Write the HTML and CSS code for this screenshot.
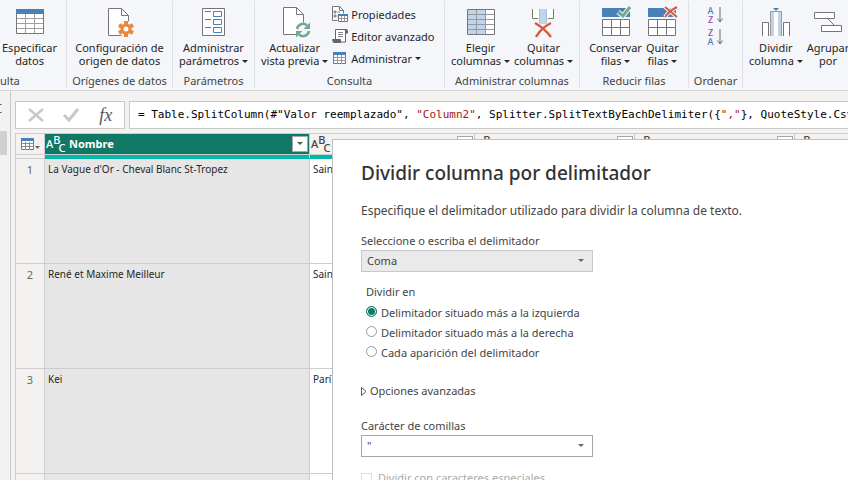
FILE: index.html
```html
<!DOCTYPE html>
<html lang="es">
<head>
<meta charset="utf-8">
<title>Editor de Power Query</title>
<link rel="stylesheet" href="styles.css">
</head>
<body>
<header class="ribbon">
  <section class="group g-query">
    <div class="tools">
      <button class="tool"><svg class="icon" viewBox="0 0 32 32"><path d="M2.500 5.500h27v22h-27z" fill="#fff" stroke="#767676"/><path d="M3 12.500h26M3 17.500h26M3 22.500h26M11.500 8v19M20.500 8v19" stroke="#a0a0a0" fill="none"/><path d="M2 3h28v5H2z" fill="#4a80b8"/></svg>Especificar<br>datos</button>
    </div>
    <h2 class="caption left">ulta</h2>
  </section>
  <section class="group g-source">
    <div class="tools">
      <button class="tool"><svg class="icon" viewBox="0 0 32 32"><path d="M5.500 2.500h13l7 7v20h-20z" fill="#fff" stroke="#767676"/><path d="M18.500 2.500v7h7" fill="none" stroke="#767676"/><circle cx="23" cy="23" r="8" fill="#f4f6f9"/><g stroke="#e88a3c" stroke-width="4"><path d="M23 15v16M16 19l14 8M30 19l-14 8"/></g><circle cx="23" cy="23" r="5.500" fill="#e88a3c"/><circle cx="23" cy="23" r="2.500" fill="#fff"/></svg>Configuración de<br>origen de datos</button>
    </div>
    <h2 class="caption">Orígenes de datos</h2>
  </section>
  <section class="group g-params">
    <div class="tools">
      <button class="tool"><svg class="icon" viewBox="0 0 32 32"><path d="M4.500 2.500h22v27h-22z" fill="#fff" stroke="#767676"/><path d="M7 5.500h6M7 13.500h6M7 21.500h6" stroke="#767676"/><path d="M15.500 5.500h8v5h-8zM15.500 13.500h8v5h-8zM15.500 21.500h8v5h-8z" fill="#fff" stroke="#4a80b8"/></svg>Administrar<br><span>parámetros <i class="caret"></i></span></button>
    </div>
    <h2 class="caption">Parámetros</h2>
  </section>
  <section class="group g-refresh">
    <div class="tools">
      <button class="tool"><svg class="icon" viewBox="0 0 32 32"><path d="M4.500 1.500h13l7 7v20h-20z" fill="#fff" stroke="#767676"/><path d="M17.500 1.500v7h7" fill="none" stroke="#767676"/><circle cx="24" cy="24" r="7.500" fill="#f4f6f9"/><path d="M18 23a6 6 0 0 1 10-3.500M30 25a6 6 0 0 1-10 3.500" fill="none" stroke="#74a892" stroke-width="2.500"/><path d="M31 16.500v6.500h-6.500zM17 31.500V25h6.500z" fill="#74a892"/></svg>Actualizar<br><span>vista previa <i class="caret"></i></span></button>
      <div class="stack">
        <button class="row-tool"><svg class="small" viewBox="0 0 16 16"><path d="M.5 14.500v-14h7l4 4v3" fill="#fff" stroke="#767676"/><path d="M7.500.5v4h4M.5 14.500h5" fill="none" stroke="#767676"/><path d="M2 5h2v2H2zM2 9h2v2H2zM5 6h3M5 10h1" fill="#767676" stroke="#999"/><path d="M6.500 8.500h9v7h-9z" fill="#fff" stroke="#767676"/><path d="M7 12.500h9M9.500 10v5M12.500 10v5" stroke="#999"/><path d="M6 8h10v2H6z" fill="#4a80b8"/></svg>Propiedades</button>
        <button class="row-tool"><svg class="small" viewBox="0 0 16 16"><path d="M3.500 12V1.500h10V14H5" fill="#fff" stroke="#666"/><path d="M12.500 1.500q3-1 3 1.500v2h-2M.5 11.500h8v3h-7z" fill="#666" stroke="#666"/><path d="M6 4.500h5M6 6.500h5M6 8.500h5" stroke="#888"/></svg>Editor avanzado</button>
        <button class="row-tool"><svg class="small" viewBox="0 0 16 16"><path d="M1.500 3.500h12v10h-12z" fill="#fff" stroke="#767676"/><path d="M2 7.500h12M2 10.500h12M5.500 5v9M9.500 5v9" stroke="#999"/><path d="M1 2h13v3H1z" fill="#4a80b8"/></svg>Administrar <i class="caret"></i></button>
      </div>
    </div>
    <h2 class="caption">Consulta</h2>
  </section>
  <section class="group g-columns">
    <div class="tools">
      <button class="tool"><svg class="icon" viewBox="0 0 32 32"><path d="M2.500 3.500h27v25h-27z" fill="#fff" stroke="#767676"/><path d="M3 4h18v24H3z" fill="#c0d4ea"/><path d="M3 8.500h26M3 13.500h26M3 18.500h26M3 23.500h26M11.500 4v24M20.500 4v24" stroke="#909aa5"/></svg>Elegir<br><span>columnas <i class="caret"></i></span></button>
      <button class="tool"><svg class="icon" viewBox="0 0 32 32"><path d="M5 3h22v9H5z" fill="#fff"/><path d="M5.500 3v9.500H11M26.500 3v9.500H21" fill="none" stroke="#767676"/><path d="M12 3h8v15h-8z" fill="#c0d4ea"/><path d="M12.500 3v13M19.500 3v13" stroke="#a9bdd3"/><path d="M8 17q9 5 16 14M24 17q-10 5-15 14" stroke="#d8593b" stroke-width="2.500" fill="none"/></svg>Quitar<br><span>columnas <i class="caret"></i></span></button>
    </div>
    <h2 class="caption">Administrar columnas</h2>
  </section>
  <section class="group g-rows">
    <div class="tools">
      <button class="tool"><svg class="icon" viewBox="0 0 32 32"><path d="M2 2h28v9H2z" fill="#4a80b8"/><path d="M2.500 13.500h27v16h-27zM2.500 21.500h27M11.500 13v16M20.500 13v16" fill="#fff" stroke="#767676"/><path d="M18 6l5 4 7-9" fill="none" stroke="#f4f6f9" stroke-width="5"/><path d="M18 6l5 4 7-9" fill="none" stroke="#74a892" stroke-width="3"/></svg>Conservar<br><span>filas <i class="caret"></i></span></button>
      <button class="tool"><svg class="icon" viewBox="0 0 32 32"><path d="M2 2h28v9H2z" fill="#4a80b8"/><path d="M2.500 13.500h27v16h-27zM2.500 21.500h27M11.500 13v16M20.500 13v16" fill="#fff" stroke="#767676"/><path d="M19 1l12 10M31 1q-8 4-12 10" fill="none" stroke="#f4f6f9" stroke-width="4"/><path d="M19 1l12 10M31 1q-8 4-12 10" fill="none" stroke="#d8593b" stroke-width="2"/></svg>Quitar<br><span>filas <i class="caret"></i></span></button>
    </div>
    <h2 class="caption">Reducir filas</h2>
  </section>
  <section class="group g-sort">
    <div class="tools sorts">
      <button class="sort" aria-label="Orden ascendente"><span class="letters"><b class="a">A</b><b class="z">Z</b></span><svg viewBox="0 0 6 16"><path d="M3 0v15M.5 11.500L3 15 5.500 11.500" fill="none" stroke="#666"/></svg></button>
      <button class="sort" aria-label="Orden descendente"><span class="letters"><b class="z">Z</b><b class="a">A</b></span><svg viewBox="0 0 6 16"><path d="M3 0v15M.5 11.500L3 15 5.500 11.500" fill="none" stroke="#666"/></svg></button>
    </div>
    <h2 class="caption">Ordenar</h2>
  </section>
  <section class="group g-split">
    <div class="tools">
      <button class="tool"><svg class="icon" viewBox="0 0 32 32"><path d="M2.500 30V16.500h6V30M23.500 30V16.500h6V30" fill="#fff" stroke="#767676"/><path d="M10 5h4v25h-4zM18 5h4v25h-4z" fill="#c0d4ea"/><path d="M10.500 30V5.500h11V30" fill="none" stroke="#9c9c9c"/><path d="M14 6h4v24h-4z" fill="#fff"/><path d="M13 2h6l-3 3z" fill="#4a80b8"/></svg>Dividir<br><span>columna <i class="caret"></i></span></button>
      <button class="tool"><svg class="icon" viewBox="0 0 32 32"><path d="M2.500 6.500h20v6h-20zM9.500 19.500h20v6h-20z" fill="#fff" stroke="#767676"/><path d="M16 13l6 6" stroke="#767676"/></svg>Agrupar<br>por</button>
    </div>
  </section>
</header>
<main class="workspace">
  <aside class="pane">
    <svg class="expand" viewBox="0 0 2 9"><path d="M0 .5h1.500M0 8.500h1.500" stroke="#555"/></svg>
    <div class="selected"></div>
  </aside>
  <section class="content">
    <div class="formula">
      <div class="actions">
        <button aria-label="Cancelar"><svg viewBox="0 0 16 14"><path d="M1 1l14 12M15 1L1 13" stroke="#c8c8c8" stroke-width="2.500"/></svg></button>
        <button aria-label="Aceptar"><svg viewBox="0 0 16 14"><path d="M1 7l5 5 9-11" fill="none" stroke="#c8c8c8" stroke-width="3"/></svg></button>
        <button class="fx" aria-label="Insertar paso">fx</button>
      </div>
      <code class="expression">= Table.SplitColumn(#"Valor reemplazado", <span class="str">"Column2"</span>, Splitter.SplitTextByEachDelimiter({<span class="str">","</span>}, QuoteStyle.Csv</code>
    </div>
    <table class="grid">
      <colgroup><col class="c-num"><col class="c-name"><col class="c-second"><col class="c-rest"><col class="c-rest"><col class="c-rest"></colgroup>
      <thead>
        <tr class="heads">
          <th><button class="corner" aria-label="Tabla"><svg viewBox="0 0 20 13"><path d="M.5 1.500h12v10H.5z" fill="#fff" stroke="#767676"/><path d="M1 5.500h12M1 8.500h12M4.500 4v8M8.500 4v8" stroke="#8c8c8c"/><path d="M0 0h13v3H0z" fill="#4a80b8"/><path d="M14 8h5l-2.500 3z" fill="#666"/></svg></button></th>
          <th class="active"><div class="head"><span class="abc"><b>A</b><b>B</b><b>C</b></span>Nombre<button class="filter" aria-label="Filtrar"><i class="caret"></i></button></div></th>
          <th><div class="head"><span class="abc"><b>A</b><b>B</b><b>C</b></span><button class="filter" aria-label="Filtrar"></button></div></th>
          <th><div class="head"><span class="abc"><b>A</b><b>B</b><b>C</b></span><button class="filter" aria-label="Filtrar"></button></div></th>
          <th><div class="head"><span class="abc"><b>A</b><b>B</b><b>C</b></span><button class="filter" aria-label="Filtrar"></button></div></th>
          <th><div class="head"><span class="abc"><b>A</b><b>B</b><b>C</b></span><button class="filter" aria-label="Filtrar"></button></div></th>
        </tr>
        <tr class="quality"><td></td><td></td><td></td><td></td><td></td><td></td></tr>
      </thead>
      <tbody>
        <tr><th>1</th><td class="picked">La Vague d'Or - Cheval Blanc St-Tropez</td><td>Sain</td><td></td><td></td><td></td></tr>
        <tr><th>2</th><td class="picked">René et Maxime Meilleur</td><td>Sain</td><td></td><td></td><td></td></tr>
        <tr><th>3</th><td class="picked">Kei</td><td>Parí</td><td></td><td></td><td></td></tr>
        <tr><th></th><td class="picked"></td><td></td><td></td><td></td><td></td></tr>
      </tbody>
    </table>
  </section>
</main>
<form class="dialog" role="dialog" aria-labelledby="dialog-title">
  <h1 id="dialog-title">Dividir columna por delimitador</h1>
  <p class="lead">Especifique el delimitador utilizado para dividir la columna de texto.</p>
  <label class="label" for="delimiter">Seleccione o escriba el delimitador</label>
  <div class="combo shaded"><select id="delimiter"><option>Coma</option></select><i class="caret"></i></div>
  <fieldset>
    <legend>Dividir en</legend>
    <label class="choice"><input type="radio" name="at" checked>Delimitador situado más a la izquierda</label>
    <label class="choice"><input type="radio" name="at">Delimitador situado más a la derecha</label>
    <label class="choice"><input type="radio" name="at">Cada aparición del delimitador</label>
  </fieldset>
  <button type="button" class="advanced"><svg viewBox="0 0 6 9"><path d="M.5 .5v8l4.500-4z" fill="none" stroke="#555"/></svg>Opciones avanzadas</button>
  <label class="label" for="quote">Carácter de comillas</label>
  <div class="combo"><select id="quote"><option>"</option></select><i class="caret"></i></div>
  <label class="check"><input type="checkbox" disabled>Dividir con caracteres especiales</label>
</form>
</body>
</html>
```

FILE: styles.css
```css
* { box-sizing: border-box; }

body {
  margin: 0;
  height: 100vh;
  overflow: hidden;
  display: flex;
  flex-direction: column;
  position: relative;
  background: #f3f2f1;
  color: #262626;
  font: 11px/13px "Noto Sans", "Open Sans", sans-serif;
}

button {
  margin: 0;
  padding: 0;
  border: 0;
  background: none;
  color: inherit;
  font: inherit;
}

svg { display: block; flex: none; overflow: visible; }

.caret {
  display: inline-block;
  flex: none;
  border: 3px solid transparent;
  border-top-color: currentColor;
  border-bottom: 0;
  vertical-align: 2px;
}

/* Ribbon */
.ribbon {
  display: flex;
  flex: none;
  height: 91px;
  overflow: hidden;
  background: #f4f6f9;
  border-bottom: 1px solid #d4d6d9;
}

.group {
  display: flex;
  flex: none;
  flex-direction: column;
  justify-content: space-between;
  margin: 1px 0 2px;
  padding: 5px 0 0;
  border-right: 1px solid #dfe1e4;
}

.g-query { width: 67px; }
.g-source { width: 106px; }
.g-params { width: 82px; }
.g-refresh { width: 190px; }
.g-columns { width: 135px; }
.g-rows { width: 109px; }
.g-sort { width: 54px; }
.g-split { flex: 1 0 106px; border: 0; }

.tools {
  display: flex;
  justify-content: center;
  gap: 4px;
  white-space: nowrap;
}

.g-query .tools { justify-content: flex-start; padding-left: 2px; }
.g-refresh .tools { justify-content: flex-start; padding-left: 6px; }
.g-split .tools { justify-content: flex-start; padding-left: 6px; }

.tool { display: block; text-align: center; white-space: nowrap; }
.icon { width: 32px; height: 32px; margin: 0 auto 3px; }

.stack { display: flex; flex-direction: column; gap: 6px; }
.row-tool { display: flex; align-items: center; gap: 3px; height: 16px; }
.small { width: 16px; height: 16px; }

.caption {
  margin: 0;
  height: 14px;
  color: #444;
  font-size: 11px;
  font-weight: 400;
  text-align: center;
  white-space: nowrap;
}
.caption.left { text-align: left; }

.tools.sorts { flex-direction: column; align-items: center; gap: 4px; }
.sort { display: flex; align-items: center; gap: 4px; }
.letters { display: flex; flex-direction: column; }
.letters b { font-size: 9px; line-height: 9px; font-weight: 500; }
.letters .a { color: #4a80b8; }
.letters .z { color: #8a50a8; }
.sort svg { width: 6px; height: 16px; }

/* Workspace */
.workspace { display: flex; flex: 1; min-height: 0; }

.pane {
  flex: none;
  width: 11px;
  padding-top: 13px;
  border-right: 1px solid #c8c8c8;
}
.expand { width: 2px; height: 9px; margin-bottom: 18px; }
.selected { width: 7px; height: 24px; background: #d2d0ce; }

.content { flex: 1; min-width: 0; padding: 10px 0 0 4px; overflow: hidden; }

.formula { display: flex; gap: 4px; height: 28px; margin-bottom: 4px; }

.actions {
  display: flex;
  flex: none;
  align-items: center;
  justify-content: space-around;
  width: 110px;
  padding: 0 2px;
  background: #fff;
  border: 1px solid #c8c8c8;
}
.actions svg { width: 16px; height: 14px; }
.fx { color: #555; font: italic 18px/20px "Liberation Serif", serif; }

.expression {
  flex: 1;
  min-width: 0;
  padding-left: 8px;
  overflow: hidden;
  background: #fff;
  border: 1px solid #c8c8c8;
  border-right: 0;
  color: #000;
  font: 11px/26px "DejaVu Sans Mono", monospace;
  white-space: pre;
}
.str { color: #a31515; }

.grid {
  width: 939px;
  table-layout: fixed;
  border-collapse: collapse;
  background: #fff;
}
.c-num { width: 29px; }
.c-name { width: 265px; }
.c-second { width: 165px; }
.c-rest { width: 160px; }

.grid th, .grid td {
  padding: 0 3px;
  border: 1px solid #cecece;
  text-align: left;
  vertical-align: top;
}
.grid th { background: #f3f2f1; font-weight: 400; }
.grid .heads th { padding: 0 1px; }
.heads { height: 21px; }
.grid .heads .active { background: #117865; color: #fff; font-weight: 700; }
.head { display: flex; align-items: center; height: 19px; }
.corner { display: block; padding: 4px 0 0 4px; }
.corner svg { width: 20px; height: 13px; }

.abc { display: flex; flex: none; align-items: center; width: 23px; color: #444; font-size: 11px; line-height: 12px; }
.active .abc { color: #fff; }
.abc b { font-weight: 500; }
.abc b:nth-child(2) { margin-top: -7px; }
.abc b:nth-child(3) { margin: 9px 0 0 -2px; }

.filter {
  display: flex;
  align-items: center;
  justify-content: center;
  width: 16px;
  height: 16px;
  margin-left: auto;
  background: #fff;
  border: 1px solid #a6a6a6;
  color: #555;
}

.quality { height: 4px; }
.grid .quality td { padding: 0; background: #01b8aa; border-bottom-color: #01b8aa; }
.grid .quality td:first-child { background: #f3f2f1; border-bottom-color: #cecece; }

.grid tbody tr { height: 105px; }
.grid tbody td { padding-top: 4px; font-size: 10px; }
.grid tbody th { padding-top: 4px; color: #666; text-align: center; }
.grid tbody tr:first-child td { border-top-color: #01b8aa; }
.grid .picked { background: #e6e6e6; }

/* Dialog */
.dialog {
  position: absolute;
  top: 139px;
  left: 332px;
  right: -1px;
  bottom: -1px;
  padding: 20px 28px 0;
  overflow: hidden;
  background: #fff;
  border: 1px solid #c0c0c0;
  color: #444;
  font-size: 11px;
  line-height: 16px;
}
.dialog h1 {
  margin: 0 0 17px;
  color: #333;
  font-size: 19px;
  font-weight: 500;
  line-height: 26px;
}
.lead { margin: 0 0 14px; font-size: 12px; }
.label { display: block; margin-bottom: 1px; }

.combo { position: relative; width: 232px; height: 22px; border: 1px solid #a6a6a6; background: #fff; }
.combo.shaded { border-color: #c8c8c8; background: #eaeaea; }
.combo select {
  width: 100%;
  height: 20px;
  padding: 0 5px;
  border: 0;
  appearance: none;
  background: none;
  color: inherit;
  font: inherit;
}
.combo .caret { position: absolute; top: 8px; right: 8px; color: #666; pointer-events: none; }

fieldset { margin: 12px 0 20px; padding: 0 5px; border: 0; }
legend { padding: 0; margin-bottom: 3px; }
.choice { display: flex; align-items: center; gap: 4px; height: 20px; }
.choice input {
  appearance: none;
  width: 11px;
  height: 11px;
  margin: 0 0 3px;
  border: 1px solid #999;
  border-radius: 50%;
  background: #fff;
}
.choice input:checked {
  border-color: #117865;
  background: #117865;
  box-shadow: inset 0 0 0 1px #fff;
}

.advanced { display: flex; align-items: center; gap: 3px; margin-bottom: 19px; }
.advanced svg { width: 6px; height: 9px; }

.check { display: flex; align-items: center; gap: 6px; margin-top: 13px; color: #aaa; }
.check input {
  appearance: none;
  width: 11px;
  height: 11px;
  margin: 0;
  border: 1px solid #ddd;
}
```
